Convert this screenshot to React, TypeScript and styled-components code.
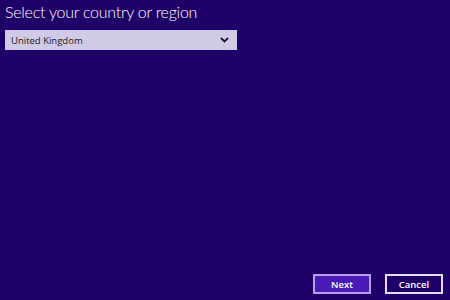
import { createGlobalStyle, styled } from "styled-components";

const Global = createGlobalStyle`
  html, body {
    margin: 0;
    padding: 0;
    background: #1f0068;
  }
  #root {
    height: 300px;
  }
`;

const Page = styled.div`
  width: 450px;
  height: 300px;
  box-sizing: border-box;
  display: flex;
  flex-direction: column;
  padding: 0 7px 6px 5px;
  background: #1f0068;
  font-family: "Open Sans", "Noto Sans", sans-serif;
`;

const Title = styled.h1`
  margin: 0;
  height: 30px;
  font-family: Lato, "Open Sans", sans-serif;
  font-size: 16px;
  font-weight: 300;
  letter-spacing: -0.25px;
  line-height: 23px;
  color: #ffffff;
  white-space: nowrap;
`;

const Select = styled.div`
  width: 232px;
  height: 20px;
  box-sizing: border-box;
  display: flex;
  align-items: center;
  justify-content: space-between;
  padding: 0 8px 0 6px;
  background: #d0cae6;
  color: #1a1a1a;
  font-size: 9.5px;
  cursor: default;
`;

const Spacer = styled.div`
  flex: 1;
`;

const Footer = styled.div`
  display: flex;
  justify-content: flex-end;
  gap: 14px;
`;

const Button = styled.button<{ $primary?: boolean }>`
  width: 58px;
  height: 20px;
  box-sizing: border-box;
  padding: 0;
  border: 2px solid ${(p) => (p.$primary ? "#b3a3e6" : "#e4def5")};
  background: ${(p) => (p.$primary ? "#4a19b8" : "#1f0068")};
  color: #ffffff;
  font-family: "Open Sans", "Noto Sans", sans-serif;
  font-size: 9.5px;
  font-weight: 600;
`;

function Chevron() {
  return (
    <svg width="9" height="6" viewBox="0 0 9 6">
      <path d="M1 1 L4.5 4.5 L8 1" fill="none" stroke="#1a1a2a" strokeWidth="1.8" />
    </svg>
  );
}

export default function App() {
  return (
    <>
      <Global />
      <Page>
        <Title>Select your country or region</Title>
        <Select>
          <span>United Kingdom</span>
          <Chevron />
        </Select>
        <Spacer />
        <Footer>
          <Button $primary>Next</Button>
          <Button>Cancel</Button>
        </Footer>
      </Page>
    </>
  );
}
